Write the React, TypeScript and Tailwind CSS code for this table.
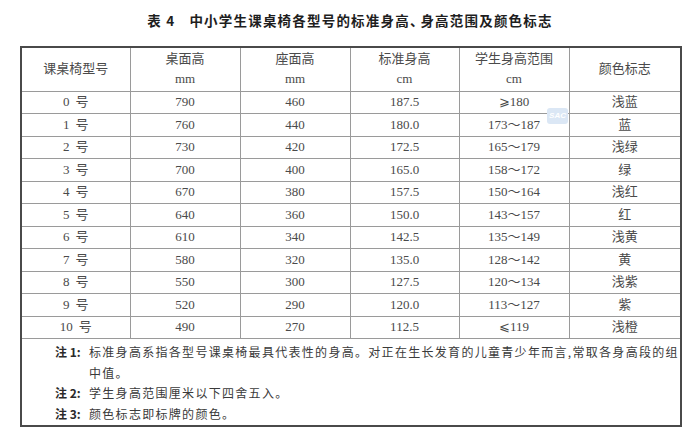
import React from "react";

const rows: [string, string, string, string, string, string][] = [
  ["0", "790", "460", "187.5", "⩾180", "浅蓝"],
  ["1", "760", "440", "180.0", "173～187", "蓝"],
  ["2", "730", "420", "172.5", "165～179", "浅绿"],
  ["3", "700", "400", "165.0", "158～172", "绿"],
  ["4", "670", "380", "157.5", "150～164", "浅红"],
  ["5", "640", "360", "150.0", "143～157", "红"],
  ["6", "610", "340", "142.5", "135～149", "浅黄"],
  ["7", "580", "320", "135.0", "128～142", "黄"],
  ["8", "550", "300", "127.5", "120～134", "浅紫"],
  ["9", "520", "290", "120.0", "113～127", "紫"],
  ["10", "490", "270", "112.5", "⩽119", "浅橙"],
];

const cell = "border border-[#9a9a9a] text-center align-middle p-0";

export default function App() {
  return (
    <div
      className="w-[700px] h-[440px] bg-white relative overflow-hidden"
      style={{ fontFamily: '"Liberation Serif", "Noto Sans CJK SC", serif' }}
    >
      <div
        className="h-[40px] pt-[10px] text-center text-[13.5px] leading-[20px] font-bold text-[#1e1e1e] tracking-[1.2px]"
        style={{ fontFamily: '"Noto Sans CJK SC", "Liberation Sans", sans-serif' }}
      >
        表 4<span className="inline-block w-[14px]" />中小学生课桌椅各型号的标准身高<span className="tracking-[-3px]">、</span>身高范围及颜色标志
      </div>
      <div className="pl-[20px] pt-[6px]">
        <table className="w-[660px] table-fixed border-collapse border-2 border-[#4a4a4a] text-[13px] text-[#4a4a4a]">
          <colgroup>
            <col className="w-[109px]" />
            <col className="w-[110px]" />
            <col className="w-[110px]" />
            <col className="w-[109px]" />
            <col className="w-[110px]" />
            <col className="w-[112px]" />
          </colgroup>
          <thead>
            <tr className="h-[44px] leading-[20px]">
              <th className={`${cell} font-normal`}>课桌椅型号</th>
              <th className={`${cell} font-normal`}>
                <div>桌面高</div>
                <div>mm</div>
              </th>
              <th className={`${cell} font-normal`}>
                <div>座面高</div>
                <div>mm</div>
              </th>
              <th className={`${cell} font-normal`}>
                <div>标准身高</div>
                <div>cm</div>
              </th>
              <th className={`${cell} font-normal`}>
                <div>学生身高范围</div>
                <div>cm</div>
              </th>
              <th className={`${cell} font-normal`}>颜色标志</th>
            </tr>
          </thead>
          <tbody>
            {rows.map((r, i) => (
              <tr key={i} className="h-[22.5px] leading-[20px]">
                {r.map((c, j) => (
                  <td key={j} className={cell}>
                    {j === 0 ? (
                      <>
                        {c}
                        <span className="inline-block w-[6px]" />号
                      </>
                    ) : (
                      c
                    )}
                  </td>
                ))}
              </tr>
            ))}
            <tr>
              <td
                colSpan={6}
                className="border border-[#9a9a9a] pl-[33px] pt-[3px] pb-[1px] text-[12px] leading-[20.5px] text-[#3a3a3a] text-left"
                style={{ fontFamily: '"Noto Sans CJK SC", "Liberation Serif", sans-serif' }}
              >
                <div className="flex">
                  <span className="w-[34px] shrink-0 font-bold text-[#2a2a2a]">注 1:</span>
                  <span className="tracking-[1.3px]">
                    <span className="whitespace-nowrap">
                      标准身高系指各型号课桌椅最具代表性的身高。对正在生长发育的儿童青少年而言,常取各身高段的组
                    </span>
                    <br />
                    中值。
                  </span>
                </div>
                <div className="flex">
                  <span className="w-[34px] shrink-0 font-bold text-[#2a2a2a]">注 2:</span>
                  <span className="tracking-[1.3px]">学生身高范围厘米以下四舍五入。</span>
                </div>
                <div className="flex">
                  <span className="w-[34px] shrink-0 font-bold text-[#2a2a2a]">注 3:</span>
                  <span className="tracking-[1.3px]">颜色标志即标牌的颜色。</span>
                </div>
              </td>
            </tr>
          </tbody>
        </table>
      </div>
      <div className="absolute left-[547px] top-[108px] w-[21px] h-[16px] rounded-[3px] bg-[#dbe7f5] flex items-center justify-center">
        <span
          className="text-[8px] italic font-bold text-white leading-none"
          style={{ fontFamily: '"Liberation Sans", sans-serif' }}
        >
          SAC
        </span>
      </div>
    </div>
  );
}
